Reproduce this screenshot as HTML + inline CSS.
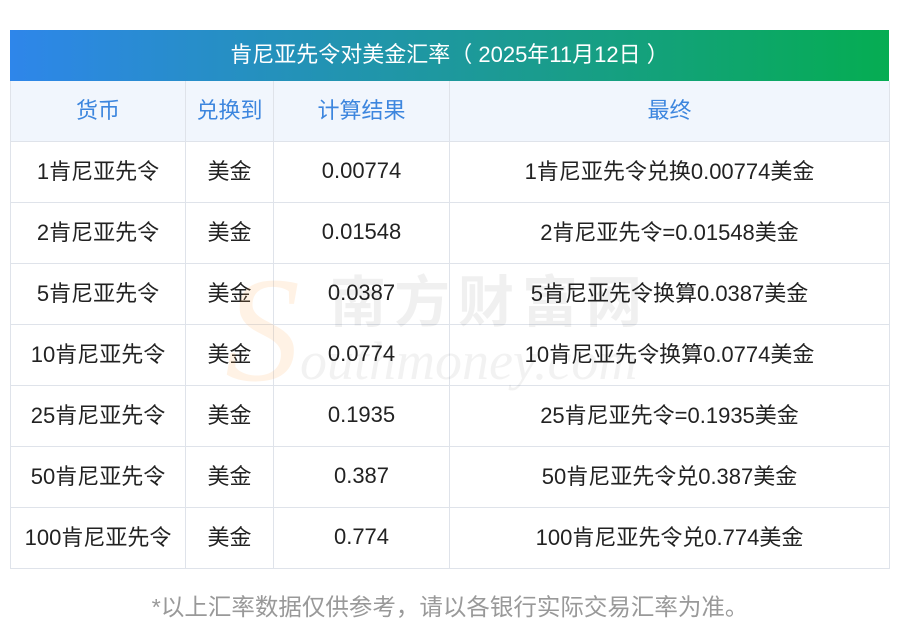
<!DOCTYPE html>
<html><head><meta charset="utf-8"><style>
body{margin:0;width:900px;height:636px;background:#fff;font-family:"Liberation Sans","Noto Sans CJK SC",sans-serif;position:relative;overflow:hidden}
.title{position:absolute;left:10px;top:30px;width:879px;height:51px;background:linear-gradient(90deg,#2e86ea,#1a9c8e 60%,#05ad52);color:#fff;font-size:22px;line-height:49px;text-align:center}
table{position:absolute;left:10px;top:81px;width:880px;border-collapse:collapse;table-layout:fixed}
td{border:1px solid #dfe3ea;height:60px;text-align:center;vertical-align:middle;font-size:22px;line-height:26px;color:#222;padding:0}
td span{display:inline-block;vertical-align:middle;line-height:26px;position:relative;top:-2px}
tr.h td{background:#f1f6fd;color:#3d86de;height:60px;border-top:none}
.foot{position:absolute;top:588px;width:900px;text-align:center;color:#999;font-size:23.5px}
.wm{position:absolute;left:330px;top:258px;font-size:56px;color:rgba(0,0,0,0.06);font-weight:bold;letter-spacing:8px}
.wm2{position:absolute;left:300px;top:330px;font-size:54px;color:rgba(0,0,0,0.05);font-style:italic;font-family:"Liberation Serif",serif}
.s{position:absolute;left:225px;top:255px;font-size:150px;color:rgba(255,170,80,0.15);font-family:"Liberation Serif",serif;font-style:italic;line-height:1}
</style></head><body>
<div class="title">肯尼亚先令对美金汇率（ 2025年11月12日 ）</div>
<table>
<colgroup><col style="width:175px"><col style="width:88px"><col style="width:176px"><col></colgroup>
<tr class="h"><td>货币</td><td>兑换到</td><td>计算结果</td><td>最终</td></tr>
<tr><td>1肯尼亚先令</td><td>美金</td><td><span>0.00774</span></td><td>1肯尼亚先令兑换0.00774美金</td></tr>
<tr><td>2肯尼亚先令</td><td>美金</td><td><span>0.01548</span></td><td>2肯尼亚先令=0.01548美金</td></tr>
<tr><td>5肯尼亚先令</td><td>美金</td><td><span>0.0387</span></td><td>5肯尼亚先令换算0.0387美金</td></tr>
<tr><td>10肯尼亚先令</td><td>美金</td><td><span>0.0774</span></td><td>10肯尼亚先令换算0.0774美金</td></tr>
<tr><td>25肯尼亚先令</td><td>美金</td><td><span>0.1935</span></td><td>25肯尼亚先令=0.1935美金</td></tr>
<tr><td>50肯尼亚先令</td><td>美金</td><td><span>0.387</span></td><td>50肯尼亚先令兑0.387美金</td></tr>
<tr><td>100肯尼亚先令</td><td>美金</td><td><span>0.774</span></td><td>100肯尼亚先令兑0.774美金</td></tr>
</table>
<div class="s">S</div>
<div class="wm">南方财富网</div>
<div class="wm2">outhmoney.com</div>
<div class="foot">*以上汇率数据仅供参考，请以各银行实际交易汇率为准。</div>
</body></html>
